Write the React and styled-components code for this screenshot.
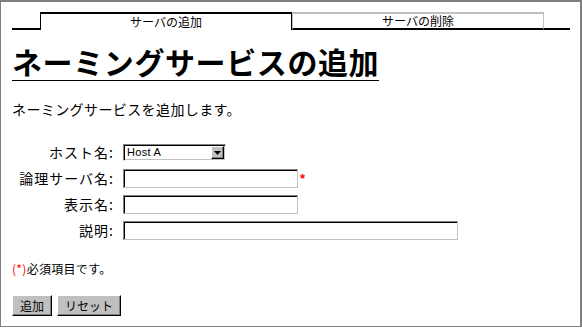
import React from "react";
import styled, { createGlobalStyle } from "styled-components";

const GlobalStyle = createGlobalStyle`
  html, body {
    margin: 0;
    padding: 0;
    background: #ffffff;
  }
  body {
    width: 582px;
    height: 328px;
    overflow: hidden;
    font-family: "Noto Sans CJK JP", "Liberation Sans", sans-serif;
    color: #000000;
  }
`;

const Frame = styled.div`
  box-sizing: border-box;
  width: 582px;
  height: 327px;
  border-top: 2px solid #808080;
  border-left: 1px solid #808080;
  border-right: 2px solid #808080;
  border-bottom: 1px solid #808080;
  padding: 10px 10px 0 11px;
`;

const TabBar = styled.div`
  display: flex;
  height: 18px;
  width: 558px;
`;

const TabSpacer = styled.div`
  box-sizing: border-box;
  width: ${(props) => props.width}px;
  border-bottom: 2px solid #000000;
`;

const Tab = styled.div`
  box-sizing: border-box;
  width: ${(props) => props.width}px;
  display: flex;
  justify-content: center;
  align-items: center;
  font-size: 12px;
  line-height: 14px;
  border-top: 2px solid ${(props) => (props.active ? "#000000" : "#c0c0c0")};
  border-left: 1px solid ${(props) => (props.active ? "#000000" : "#c0c0c0")};
  border-right: 1px solid ${(props) => (props.active ? "#000000" : "#c0c0c0")};
  border-bottom: ${(props) => (props.active ? "none" : "2px solid #000000")};
  padding-bottom: ${(props) => (props.active ? "1px" : "0")};
`;

const Heading = styled.h1`
  display: inline-block;
  margin: 14px 0 0 0;
  font-size: 30px;
  font-weight: bold;
  letter-spacing: 0.6px;
  line-height: 34px;
  padding-bottom: 2px;
  border-bottom: 1px solid #000000;
`;

const Intro = styled.p`
  margin: 18px 0 0 0;
  font-size: 14px;
  letter-spacing: 0.4px;
  line-height: 20px;
`;

const Form = styled.div`
  display: grid;
  grid-template-columns: 102px auto;
  grid-auto-rows: 19px;
  column-gap: 9px;
  row-gap: 7px;
  margin-top: 24px;
  align-items: center;
`;

const Label = styled.div`
  justify-self: end;
  font-size: 14px;
  letter-spacing: 1px;
  line-height: 19px;
  white-space: nowrap;
`;

const Field = styled.div`
  display: flex;
  align-items: center;
  gap: 2px;
`;

const SelectBox = styled.div`
  box-sizing: border-box;
  display: flex;
  align-items: center;
  width: 103px;
  height: 17px;
  border: 1px solid;
  border-color: #808080 #ffffff #ffffff #808080;
  box-shadow: inset 1px 1px #000000, inset -1px -1px #c0c0c0;
  padding: 1px;
  background: #ffffff;
`;

const NativeSelect = styled.select`
  appearance: none;
  flex: 1;
  min-width: 0;
  border: none;
  outline: none;
  background: transparent;
  padding: 0 0 0 2px;
  margin: 0;
  font-family: "Liberation Sans", sans-serif;
  font-size: 11px;
  letter-spacing: 0.3px;
  line-height: 13px;
  color: #000000;
`;

const ArrowButton = styled.span`
  box-sizing: border-box;
  width: 13px;
  height: 13px;
  display: flex;
  align-items: center;
  justify-content: center;
  background: #c0c0c0;
  border: 1px solid;
  border-color: #ffffff #000000 #000000 #ffffff;
  box-shadow: inset -1px -1px #808080;
`;

const TextInput = styled.input`
  box-sizing: border-box;
  width: ${(props) => props.width}px;
  height: 19px;
  margin: 0;
  padding: 0 3px;
  border: 1px solid;
  border-color: #808080 #c0c0c0 #c0c0c0 #808080;
  box-shadow: inset 1px 0 #000000, inset 0 1px #000000;
  background: #ffffff;
  font-family: "Noto Sans CJK JP", sans-serif;
  font-size: 12px;
  outline: none;
`;

const Required = styled.span`
  color: #ff0000;
  font-family: "Liberation Sans", sans-serif;
  font-size: 13px;
  font-weight: bold;
  line-height: 13px;
`;

const Note = styled.p`
  margin: 21px 0 0 0;
  font-size: 12px;
  letter-spacing: 0.3px;
  line-height: 16px;
`;

const NoteMark = styled.span`
  color: #ff0000;
`;

const Buttons = styled.div`
  display: flex;
  gap: 5px;
  margin-top: 18px;
`;

const Button = styled.button`
  box-sizing: border-box;
  height: 21px;
  margin: 0;
  padding: 0 7px;
  background: #c0c0c0;
  border: 1px solid;
  border-color: #ffffff #000000 #000000 #ffffff;
  box-shadow: inset -1px -1px #808080;
  font-family: "Noto Sans CJK JP", sans-serif;
  font-size: 12px;
  line-height: 17px;
  color: #000000;
`;

const App = () => {
  return (
    <>
      <GlobalStyle />
      <Frame>
        <TabBar>
          <TabSpacer width={28} />
          <Tab active width={252}>
            サーバの追加
          </Tab>
          <Tab width={252}>サーバの削除</Tab>
          <TabSpacer width={26} />
        </TabBar>
        <Heading>ネーミングサービスの追加</Heading>
        <Intro>ネーミングサービスを追加します。</Intro>
        <Form>
          <Label>ホスト名:</Label>
          <Field>
            <SelectBox>
              <NativeSelect defaultValue="Host A">
                <option>Host A</option>
              </NativeSelect>
              <ArrowButton>
                <svg width="7" height="4" viewBox="0 0 7 4">
                  <path d="M0 0 H7 L3.5 4 Z" fill="#000000" />
                </svg>
              </ArrowButton>
            </SelectBox>
          </Field>
          <Label>論理サーバ名:</Label>
          <Field>
            <TextInput width={175} />
            <Required>*</Required>
          </Field>
          <Label>表示名:</Label>
          <Field>
            <TextInput width={175} />
          </Field>
          <Label>説明:</Label>
          <Field>
            <TextInput width={335} />
          </Field>
        </Form>
        <Note>
          <NoteMark>(*)</NoteMark>必須項目です。
        </Note>
        <Buttons>
          <Button>追加</Button>
          <Button>リセット</Button>
        </Buttons>
      </Frame>
    </>
  );
};

export default App;
